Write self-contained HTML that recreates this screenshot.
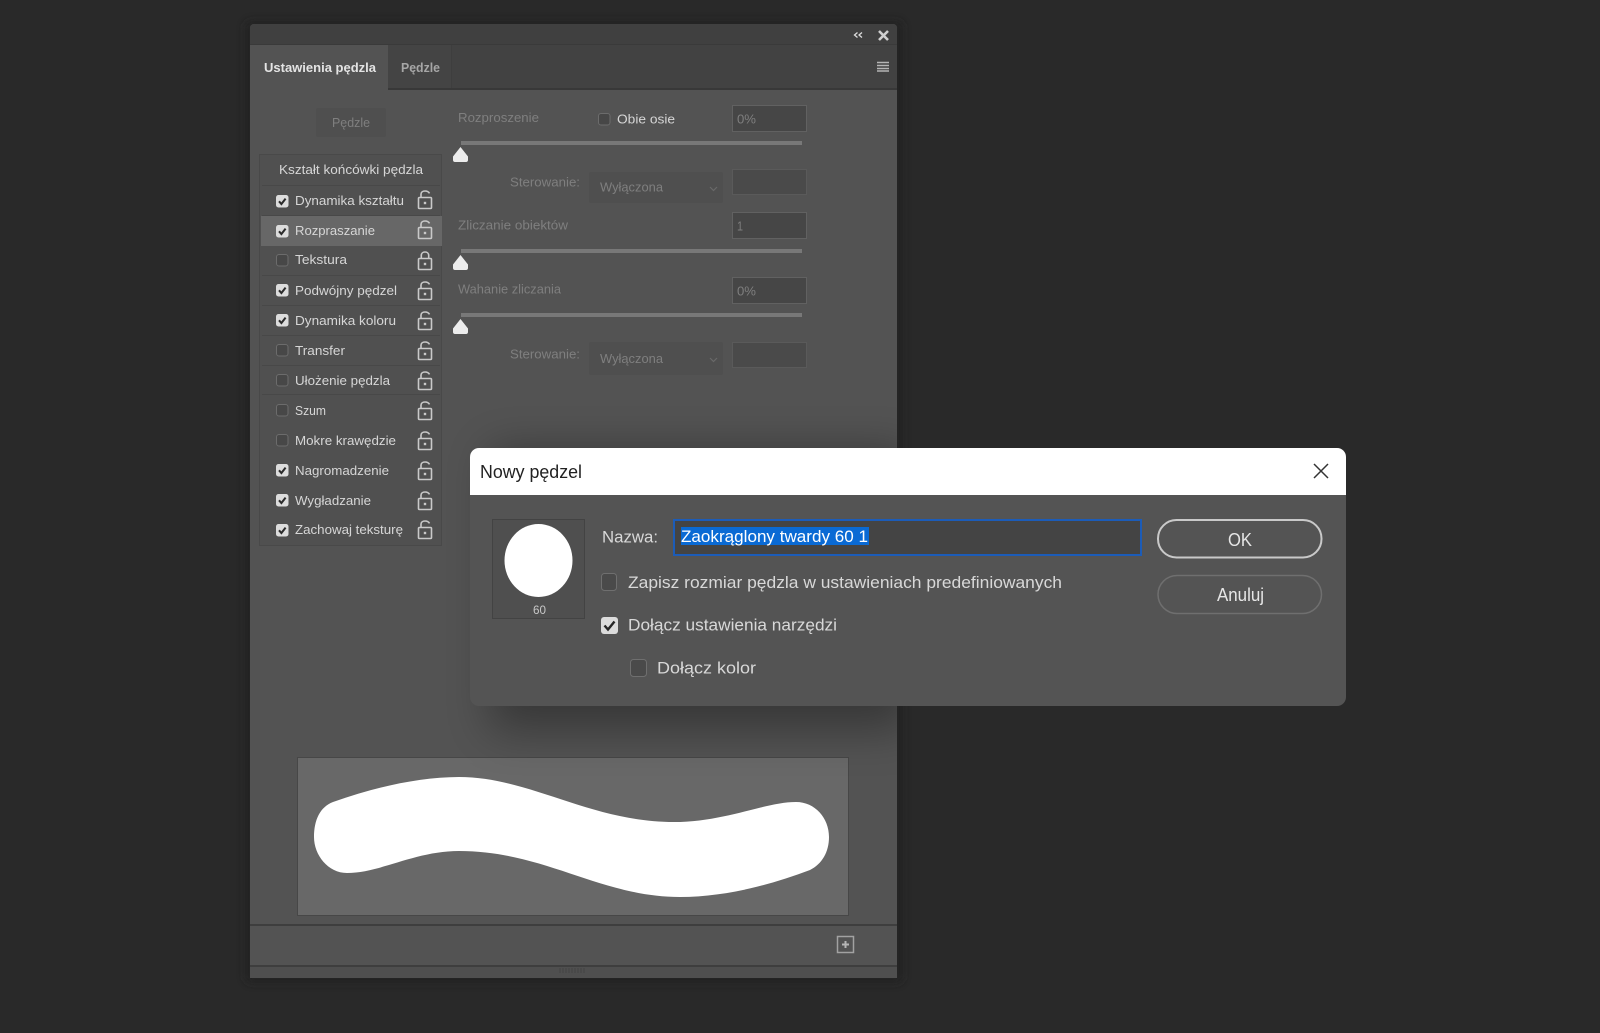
<!DOCTYPE html>
<html lang="pl">
<head>
<meta charset="utf-8">
<title>Nowy pędzel</title>
<style>
html,body{margin:0;padding:0;background:#292929;}
svg{display:block;filter:blur(.35px);}
text{font-family:"Liberation Sans",sans-serif;}
.l{font-size:13px;fill:#d6d6d6;}
.d{font-size:13px;fill:#7f7f7f;}
.m{font-size:17px;fill:#d8d8d8;}
</style>
</head>
<body>
<svg xmlns="http://www.w3.org/2000/svg" width="1600" height="1033" viewBox="0 0 1600 1033">
<defs>
  <filter id="b25" x="-30%" y="-50%" width="160%" height="200%"><feGaussianBlur stdDeviation="22"/></filter>
  <filter id="b6" x="-10%" y="-10%" width="120%" height="120%"><feGaussianBlur stdDeviation="4"/></filter>
  <clipPath id="pc"><rect x="250" y="24" width="647" height="954" rx="4"/></clipPath>
  <g id="uo" fill="none" stroke="#c9c9c9" stroke-width="1.6">
    <rect x="1" y="8.5" width="13" height="11" rx="1"/>
    <path d="M3.5 8.500V5.200C3.500 3.200 5.200 2 7.500 2 9.600 2 11.200 2.800 12 4.400"/>
    <rect x="6.300" y="12.800" width="2.400" height="2.400" fill="#c9c9c9" stroke="none"/>
  </g>
  <g id="lk" fill="none" stroke="#c9c9c9" stroke-width="1.6">
    <rect x="1" y="8.5" width="13" height="11" rx="1"/>
    <path d="M3.800 8.500V5.500C3.800 3.300 5.400 2 7.500 2 9.600 2 11.200 3.300 11.200 5.500V8.500"/>
    <rect x="6.300" y="12.800" width="2.400" height="2.400" fill="#c9c9c9" stroke="none"/>
  </g>
  <g id="on">
    <rect x="0" y="0" width="12.500" height="12.500" rx="2.500" fill="#dcdcdc"/>
    <path d="M3 6.300 5.400 9 9.600 3.600" fill="none" stroke="#2b2b2b" stroke-width="2"/>
  </g>
  <g id="off"><rect x=".5" y=".5" width="11.500" height="11.500" rx="2.500" fill="#474747" stroke="#6c6c6c"/></g>
  <path id="th" d="M0 15V9.500L7.500 0 15 9.500V13C15 14.200 14.200 15 13 15H2C.8 15 0 14.200 0 13Z" fill="#ececec"/>
</defs>

<rect width="1600" height="1033" fill="#292929"/>
<rect x="245" y="21" width="658" height="962" rx="6" fill="#212121" opacity=".8" filter="url(#b6)"/>

<!-- panel -->
<g clip-path="url(#pc)">
  <rect x="250" y="24" width="647" height="954" fill="#535353"/>
  <rect x="250" y="24" width="647" height="21" fill="#404040"/>
  <rect x="250" y="44" width="647" height="1" fill="#3a3a3a"/>
  <rect x="250" y="45" width="647" height="44" fill="#424242"/>
  <rect x="250" y="88" width="647" height="2" fill="#383838"/>
  <rect x="250" y="45" width="138" height="45" fill="#535353"/>
  <rect x="388" y="45" width="64" height="43" fill="#444"/>
  <rect x="451" y="45" width="1" height="43" fill="#3e3e3e"/>
</g>
<text x="264" y="72" font-size="13" font-weight="bold" fill="#e4e4e4" textLength="112" lengthAdjust="spacingAndGlyphs">Ustawienia pędzla</text>
<text x="401" y="72" font-size="13" font-weight="bold" fill="#a6a6a6" textLength="39" lengthAdjust="spacingAndGlyphs">Pędzle</text>

<!-- title icons -->
<path d="M857.500 32.500 854.500 35l3 2.500M862 32.500 859 35l3 2.500" fill="none" stroke="#dcdcdc" stroke-width="1.300"/>
<path d="M879 31 888 40M888 31 879 40" stroke="#cfcfcf" stroke-width="2.600"/>
<path d="M877 62.500H889M877 65.500H889M877 68.500H889M877 71H889" stroke="#b5b5b5" stroke-width="1.600"/>

<!-- Pędzle button -->
<rect x="316" y="108" width="70" height="29" rx="2" fill="#4f4f4f"/>
<text class="d" x="332" y="127" textLength="38" lengthAdjust="spacingAndGlyphs">Pędzle</text>

<!-- list -->
<rect x="259.500" y="154.500" width="182" height="391" fill="#505050" stroke="#494949"/>
<rect x="261" y="216" width="181" height="30" fill="#676767"/>
<g stroke="#484848" stroke-width="1">
  <path d="M262 185.500H440M262 215.500H440M262 275.500H440M262 305.500H440M262 335.500H440M262 365.500H440M262 394.500H440"/>
</g>
<text class="l" x="279" y="174" textLength="144" lengthAdjust="spacingAndGlyphs">Kształt końcówki pędzla</text>

<use href="#on" x="276" y="195"/><text class="l" x="295" y="205" textLength="109" lengthAdjust="spacingAndGlyphs">Dynamika kształtu</text><use href="#uo" x="417.500" y="189"/>
<use href="#on" x="276" y="225"/><text class="l" x="295" y="235" textLength="80" lengthAdjust="spacingAndGlyphs">Rozpraszanie</text><use href="#uo" x="417.500" y="219"/>
<use href="#off" x="276" y="254"/><text class="l" x="295" y="264" textLength="52" lengthAdjust="spacingAndGlyphs">Tekstura</text><use href="#lk" x="417.500" y="250"/>
<use href="#on" x="276" y="284"/><text class="l" x="295" y="295" textLength="102" lengthAdjust="spacingAndGlyphs">Podwójny pędzel</text><use href="#uo" x="417.500" y="280"/>
<use href="#on" x="276" y="314"/><text class="l" x="295" y="325" textLength="101" lengthAdjust="spacingAndGlyphs">Dynamika koloru</text><use href="#uo" x="417.500" y="310"/>
<use href="#off" x="276" y="344"/><text class="l" x="295" y="355" textLength="50" lengthAdjust="spacingAndGlyphs">Transfer</text><use href="#uo" x="417.500" y="340"/>
<use href="#off" x="276" y="374"/><text class="l" x="295" y="385" textLength="95" lengthAdjust="spacingAndGlyphs">Ułożenie pędzla</text><use href="#uo" x="417.500" y="370"/>
<use href="#off" x="276" y="404"/><text class="l" x="295" y="415" textLength="31" lengthAdjust="spacingAndGlyphs">Szum</text><use href="#uo" x="417.500" y="400"/>
<use href="#off" x="276" y="434"/><text class="l" x="295" y="445" textLength="101" lengthAdjust="spacingAndGlyphs">Mokre krawędzie</text><use href="#uo" x="417.500" y="430"/>
<use href="#on" x="276" y="464"/><text class="l" x="295" y="475" textLength="94" lengthAdjust="spacingAndGlyphs">Nagromadzenie</text><use href="#uo" x="417.500" y="460"/>
<use href="#on" x="276" y="494"/><text class="l" x="295" y="505" textLength="76" lengthAdjust="spacingAndGlyphs">Wygładzanie</text><use href="#uo" x="417.500" y="490"/>
<use href="#on" x="276" y="524"/><text class="l" x="295" y="534" textLength="108" lengthAdjust="spacingAndGlyphs">Zachowaj teksturę</text><use href="#uo" x="417.500" y="519"/>

<!-- right controls -->
<text class="d" x="458" y="122" textLength="81" lengthAdjust="spacingAndGlyphs">Rozproszenie</text>
<use href="#off" x="598" y="113"/>
<text class="l" x="617" y="123.500" textLength="58" lengthAdjust="spacingAndGlyphs">Obie osie</text>
<rect x="732.500" y="105.500" width="74" height="26" fill="#464646" stroke="#616161"/>
<text class="d" x="737" y="123.500" fill="#6f6f6f" textLength="19" lengthAdjust="spacingAndGlyphs">0%</text>
<rect x="461" y="141" width="341" height="4" fill="#787878"/>
<use href="#th" x="453" y="147"/>

<text class="d" x="510" y="186.500" textLength="70" lengthAdjust="spacingAndGlyphs">Sterowanie:</text>
<rect x="589" y="172" width="134" height="31" rx="2" fill="#4f4f4f"/>
<text class="d" x="600" y="191.500" textLength="63" lengthAdjust="spacingAndGlyphs">Wyłączona</text>
<path d="M710 187l3.500 3.500 3.500-3.500" fill="none" stroke="#696969" stroke-width="1.200"/>
<rect x="732.500" y="169.500" width="74" height="25" fill="#4a4a4a" stroke="#5a5a5a"/>

<text class="d" x="458" y="229.500" textLength="110" lengthAdjust="spacingAndGlyphs">Zliczanie obiektów</text>
<rect x="732.500" y="212.500" width="74" height="26" fill="#464646" stroke="#616161"/>
<text class="d" x="737" y="230.500" textLength="6" lengthAdjust="spacingAndGlyphs">1</text>
<rect x="461" y="249" width="341" height="4" fill="#787878"/>
<use href="#th" x="453" y="255"/>

<text class="d" x="458" y="293.500" textLength="103" lengthAdjust="spacingAndGlyphs">Wahanie zliczania</text>
<rect x="732.500" y="277.500" width="74" height="26" fill="#464646" stroke="#616161"/>
<text class="d" x="737" y="295.500" textLength="19" lengthAdjust="spacingAndGlyphs">0%</text>
<rect x="461" y="313" width="341" height="4" fill="#787878"/>
<use href="#th" x="453" y="319"/>

<text class="d" x="510" y="358.500" textLength="70" lengthAdjust="spacingAndGlyphs">Sterowanie:</text>
<rect x="589" y="342" width="134" height="33" rx="2" fill="#4f4f4f"/>
<text class="d" x="600" y="363" textLength="63" lengthAdjust="spacingAndGlyphs">Wyłączona</text>
<path d="M710 358l3.500 3.500 3.500-3.500" fill="none" stroke="#696969" stroke-width="1.200"/>
<rect x="732.500" y="342.500" width="74" height="25" fill="#4a4a4a" stroke="#5a5a5a"/>

<!-- brush preview -->
<rect x="297.500" y="757.500" width="551" height="158" fill="#686868" stroke="#474747" stroke-width="1"/>
<path d="M333 802C375 787 420 777 459 777C530 777 590 822 674 822C725 822 765 802 796 802C815 802 829 818 829 837C829 852 822 864 810 870C770 885 725 897 680 897C600 897 545 851 459 851C415 851 380 873 347 873C328 873 314 855 314 837C314 820 320 807 333 802Z" fill="#fff"/>

<!-- footer -->
<rect x="250" y="924" width="647" height="2" fill="#3e3e3e"/>
<rect x="250" y="965" width="647" height="2" fill="#3e3e3e"/>
<rect x="250" y="967" width="647" height="11" fill="#4f4f4f"/>
<path d="M560 968v5M563 968v5M566 968v5M569 968v5M572 968v5M575 968v5M578 968v5M581 968v5M584 968v5" stroke="#434343" stroke-width="1"/>
<rect x="837.500" y="936.500" width="16" height="16" fill="none" stroke="#a2a2a2" stroke-width="1.500"/>
<path d="M842 944.500H849M845.500 941V948" stroke="#b5b5b5" stroke-width="2"/>

<!-- shadow of the dialog over the panel -->
<g clip-path="url(#pc)">
  <rect x="490" y="450" width="420" height="280" fill="#000" opacity=".33" filter="url(#b25)"/>
</g>

<!-- dialog -->
<rect x="470" y="448" width="876" height="258" rx="9" fill="#545454"/>
<path d="M470 495V457a9 9 0 0 1 9-9H1337a9 9 0 0 1 9 9V495Z" fill="#fff"/>
<text x="480" y="478" font-size="18" fill="#222" textLength="102" lengthAdjust="spacingAndGlyphs">Nowy pędzel</text>
<path d="M1314 464 1328 478M1328 464 1314 478" stroke="#333" stroke-width="1.500"/>

<rect x="492.500" y="519.500" width="92" height="99" fill="#4f4f4f" stroke="#434343"/>
<ellipse cx="538.500" cy="560.500" rx="34" ry="36.500" fill="#fff"/>
<text x="533" y="614" font-size="12" fill="#c8c8c8" textLength="13" lengthAdjust="spacingAndGlyphs">60</text>

<text class="m" x="602" y="542.500" textLength="56" lengthAdjust="spacingAndGlyphs">Nazwa:</text>
<rect x="674" y="520" width="467" height="35" fill="#444" stroke="#1c5cb8" stroke-width="2"/>
<rect x="681" y="527" width="188" height="18" fill="#0a6ad4"/>
<text x="681" y="542" font-size="17" fill="#fff" textLength="187" lengthAdjust="spacingAndGlyphs">Zaokrąglony twardy 60 1</text>

<rect x="601.500" y="573.500" width="15" height="17" rx="3" fill="#4a4a4a" stroke="#6f6f6f"/>
<text class="m" x="628" y="588" textLength="434" lengthAdjust="spacingAndGlyphs">Zapisz rozmiar pędzla w ustawieniach predefiniowanych</text>
<rect x="601" y="617" width="17" height="17" rx="3" fill="#dcdcdc"/>
<path d="M604.500 625.500 608 629.500 614.500 621.500" fill="none" stroke="#262626" stroke-width="2.400"/>
<text class="m" x="628" y="630.500" textLength="209" lengthAdjust="spacingAndGlyphs">Dołącz ustawienia narzędzi</text>
<rect x="630.500" y="659.500" width="16" height="17" rx="3" fill="#4a4a4a" stroke="#6f6f6f"/>
<text class="m" x="657" y="673.500" textLength="99" lengthAdjust="spacingAndGlyphs">Dołącz kolor</text>

<rect x="1158" y="520" width="163.500" height="37.500" rx="18.500" fill="none" stroke="#c9c9c9" stroke-width="2"/>
<text x="1228" y="546" font-size="18" fill="#e6e6e6" textLength="24" lengthAdjust="spacingAndGlyphs">OK</text>
<rect x="1158" y="575.500" width="163.500" height="38" rx="19" fill="none" stroke="#6f6f6f" stroke-width="1.500"/>
<text x="1217" y="601" font-size="18" fill="#e6e6e6" textLength="47" lengthAdjust="spacingAndGlyphs">Anuluj</text>
</svg>
</body>
</html>
